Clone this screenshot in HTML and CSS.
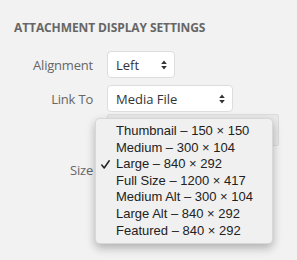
FILE: index.html
```html
<!DOCTYPE html>
<html>
<head>
<meta charset="utf-8">
<link rel="stylesheet" href="styles.css">
</head>
<body>
<div class="panel">
  <h2 class="title">Attachment Display Settings</h2>
  <div class="row">
    <span class="label">Alignment</span>
    <div class="select select-align"><span>Left</span>
      <svg class="arrows" width="6" height="10" viewBox="0 0 6 10"><path d="M3 0.5 L5.8 4 H0.2 Z M3 9.5 L5.8 6 H0.2 Z" fill="#333"/></svg>
    </div>
  </div>
  <div class="row row-link">
    <span class="label">Link To</span>
    <div class="select select-link"><span>Media File</span>
      <svg class="arrows" width="6" height="10" viewBox="0 0 6 10"><path d="M3 0.5 L5.8 4 H0.2 Z M3 9.5 L5.8 6 H0.2 Z" fill="#333"/></svg>
    </div>
  </div>
  <div class="row row-url">
    <span class="label"></span>
    <div class="url"></div>
  </div>
  <div class="row row-size">
    <span class="label">Size</span>
    <div class="select select-size"></div>
  </div>

  <ul class="menu">
    <li>Thumbnail – 150 × 150</li>
    <li>Medium – 300 × 104</li>
    <li class="checked"><svg class="check" width="9" height="9" viewBox="0 0 9 9"><path d="M0.8 5 L3.2 8 L8.2 0.8" fill="none" stroke="#222" stroke-width="1.5" stroke-linecap="round" stroke-linejoin="round"/></svg>Large – 840 × 292</li>
    <li>Full Size – 1200 × 417</li>
    <li>Medium Alt – 300 × 104</li>
    <li>Large Alt – 840 × 292</li>
    <li>Featured – 840 × 292</li>
  </ul>
</div>
</body>
</html>
```

FILE: styles.css
```css
html, body {
  margin: 0;
  padding: 0;
}
body {
  background: #f2f2f2;
  width: 297px;
  height: 260px;
  overflow: hidden;
  font-family: "Open Sans", "Liberation Sans", sans-serif;
}
.panel {
  position: relative;
  padding: 20px 0 0 14px;
}
.title {
  margin: 0;
  font-size: 12px;
  line-height: 16px;
  font-weight: 700;
  text-transform: uppercase;
  color: #666;
  letter-spacing: -0.1px;
}
.row {
  display: flex;
  align-items: center;
  gap: 14px;
  margin-top: 15px;
}
.row-link { margin-top: 7px; }
.row-url { margin-top: 2px; }
.row-size { margin-top: 10px; }
.label {
  width: 79px;
  flex: none;
  text-align: right;
  font-size: 13px;
  color: #666;
  line-height: 18px;
  letter-spacing: -0.2px;
}
.select {
  box-sizing: border-box;
  height: 27px;
  background: #fff;
  border: 1px solid #ddd;
  border-radius: 4px;
  display: flex;
  align-items: center;
  justify-content: space-between;
  padding: 0 7px 0 8px;
  font-size: 13px;
  color: #333;
}
.select span { line-height: 18px; }
.select-align { width: 68px; }
.select-link { width: 126px; }
.select-size { width: 140px; }
.arrows { display: block; }
.url {
  box-sizing: border-box;
  width: 172px;
  height: 32px;
  background: #e9e9e9;
  border: 1px solid #dcdcdc;
  border-radius: 2px;
}
.menu {
  position: absolute;
  left: 95px;
  top: 118px;
  width: 178px;
  height: 126px;
  box-sizing: border-box;
  margin: 0;
  padding: 4px 0 0 0;
  list-style: none;
  background: #f0f0f0;
  border: 1px solid rgba(0,0,0,0.1);
  border-radius: 5px;
  box-shadow: 0 4px 10px rgba(0,0,0,0.28);
  font-family: "Liberation Sans", Arial, sans-serif;
  font-size: 13px;
  line-height: 16.6px;
  color: #222;
}
.menu li {
  position: relative;
  padding-left: 20px;
  white-space: nowrap;
}
.check {
  position: absolute;
  left: 5px;
  top: 4px;
}
```
